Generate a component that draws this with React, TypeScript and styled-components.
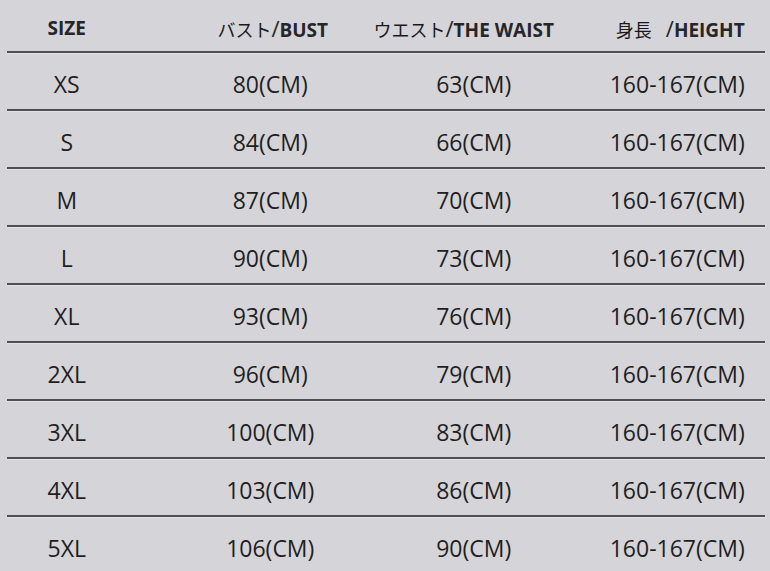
import React from "react";
import styled, { createGlobalStyle } from "styled-components";

const GlobalStyle = createGlobalStyle`
  html, body {
    margin: 0;
    padding: 0;
    background: #d5d4d9;
  }
  body {
    width: 770px;
    height: 571px;
    overflow: hidden;
    font-family: "Open Sans", "Noto Sans", sans-serif;
    color: #1f1f21;
  }
`;

const Table = styled.div`
  width: 770px;
  box-sizing: border-box;
  padding: 0 5px 0 7px;
`;

const columns = "161.5px 203.5px 203.5px 1fr";

const HeaderRow = styled.div`
  display: grid;
  grid-template-columns: ${columns};
  height: 51px;
  box-sizing: border-box;
  padding-top: 5px;
  align-items: center;
`;

const Row = styled.div`
  display: grid;
  grid-template-columns: ${columns};
  height: 58px;
  box-sizing: border-box;
  border-top: 2px solid #4f4f52;
  box-shadow: inset 0 1px 0 #e4e3e8;
  padding-top: 7px;
  align-items: center;
`;

const dataPad: Record<number, string> = {
  1: "0 42px 0 0",
  2: "0",
  3: "0",
  4: "0 0 0 14px",
};

const headPad: Record<number, string> = {
  1: "0 42px 0 0",
  2: "0 0 0 5px",
  3: "0 20px 0 0",
  4: "0 0 0 20px",
};

const Cell = styled.div<{ $col: number }>`
  text-align: center;
  white-space: nowrap;
  font-size: 23px;
  font-weight: 400;
  line-height: 1;
  padding: ${(p) => dataPad[p.$col]};
`;

const HeadCell = styled.div<{ $col: number }>`
  text-align: center;
  white-space: nowrap;
  font-size: 19px;
  font-weight: 700;
  line-height: 1;
  color: #262628;
  padding: ${(p) => headPad[p.$col]};
`;

const Jp = styled.span<{ $gap?: number }>`
  font-family: "Noto Sans CJK JP", "Noto Sans", sans-serif;
  font-weight: 400;
  font-size: 18px;
  color: #1a1a1c;
  margin-right: ${(p) => p.$gap ?? 0}px;
`;

const Slash = styled.span`
  font-weight: 400;
  font-size: 22px;
`;

const rows: [string, string, string, string][] = [
  ["XS", "80(CM)", "63(CM)", "160-167(CM)"],
  ["S", "84(CM)", "66(CM)", "160-167(CM)"],
  ["M", "87(CM)", "70(CM)", "160-167(CM)"],
  ["L", "90(CM)", "73(CM)", "160-167(CM)"],
  ["XL", "93(CM)", "76(CM)", "160-167(CM)"],
  ["2XL", "96(CM)", "79(CM)", "160-167(CM)"],
  ["3XL", "100(CM)", "83(CM)", "160-167(CM)"],
  ["4XL", "103(CM)", "86(CM)", "160-167(CM)"],
  ["5XL", "106(CM)", "90(CM)", "160-167(CM)"],
];

export default function App() {
  return (
    <>
      <GlobalStyle />
      <Table>
        <HeaderRow>
          <HeadCell $col={1}>SIZE</HeadCell>
          <HeadCell $col={2}>
            <Jp>バスト</Jp>
            <Slash>/</Slash>BUST
          </HeadCell>
          <HeadCell $col={3}>
            <Jp>ウエスト</Jp>
            <Slash>/</Slash>THE WAIST
          </HeadCell>
          <HeadCell $col={4}>
            <Jp $gap={14}>身長</Jp>
            <Slash>/</Slash>HEIGHT
          </HeadCell>
        </HeaderRow>
        {rows.map((r) => (
          <Row key={r[0]}>
            {r.map((v, i) => (
              <Cell key={i} $col={i + 1}>
                {v}
              </Cell>
            ))}
          </Row>
        ))}
      </Table>
    </>
  );
}
